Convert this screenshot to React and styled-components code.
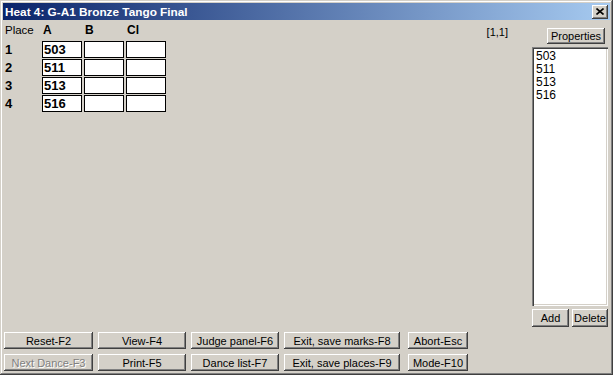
import React from 'react';
import styled, { createGlobalStyle } from 'styled-components';

const GlobalStyle = createGlobalStyle`
  html, body {
    margin: 0;
    padding: 0;
    background: #ffffff;
    width: 615px;
    height: 375px;
    overflow: hidden;
  }
  #root {
    width: 615px;
    height: 375px;
  }
`;

const places = [
  { place: 1, a: '503' },
  { place: 2, a: '511' },
  { place: 3, a: '513' },
  { place: 4, a: '516' },
];

const entries = ['503', '511', '513', '516'];

const footerButtons = [
  ['Reset-F2', 'View-F4', 'Judge panel-F6', 'Exit, save marks-F8', 'Abort-Esc'],
  ['Next Dance-F3', 'Print-F5', 'Dance list-F7', 'Exit, save places-F9', 'Mode-F10'],
];

const App = () => {
  return (
    <>
      <GlobalStyle />
      <Window>
        <TitleBar>
          <TitleText>Heat 4: G-A1 Bronze Tango Final</TitleText>
          <CloseButton>
            <svg width="8" height="7" viewBox="0 0 8 7">
              <path d="M0.5 0.5 L7.5 6.5 M7.5 0.5 L0.5 6.5" stroke="#000" strokeWidth="1.6" fill="none" />
            </svg>
          </CloseButton>
        </TitleBar>
        <Body>
          <Main>
            <MarksArea>
              <MarksGrid>
                <HeadLabel>Place</HeadLabel>
                <HeadLabel bold>A</HeadLabel>
                <HeadLabel bold>B</HeadLabel>
                <HeadLabel bold>Cl</HeadLabel>
                {places.map((row) => (
                  <React.Fragment key={row.place}>
                    <PlaceNo>{row.place}</PlaceNo>
                    <MarkCell>{row.a}</MarkCell>
                    <MarkCell />
                    <MarkCell />
                  </React.Fragment>
                ))}
              </MarksGrid>
              <Cursor>[1,1]</Cursor>
            </MarksArea>
            <SideColumn>
              <Button w={58} self="flex-end">Properties</Button>
              <ListBox>
                {entries.map((e) => (
                  <ListItem key={e}>{e}</ListItem>
                ))}
              </ListBox>
              <SideButtons>
                <Button w={37} h={18}>Add</Button>
                <Button w={36} h={18}>Delete</Button>
              </SideButtons>
            </SideColumn>
          </Main>
          <Footer>
            {footerButtons.map((row, r) =>
              row.map((label, c) => (
                <Button key={label} h={17} disabled={r === 1 && c === 0}>
                  {label}
                </Button>
              ))
            )}
          </Footer>
        </Body>
      </Window>
    </>
  );
};

const Window = styled.div`
  box-sizing: border-box;
  width: 613px;
  height: 375px;
  padding: 3px;
  background: #d4d0c8;
  display: flex;
  flex-direction: column;
  box-shadow: inset -1px -1px #404040, inset 1px 1px #d4d0c8,
    inset -2px -2px #808080, inset 2px 2px #ffffff;
  font-family: "Liberation Sans", Arial, sans-serif;
  color: #000;
`;

const TitleBar = styled.div`
  height: 17px;
  display: flex;
  align-items: center;
  justify-content: space-between;
  padding: 0 2px 0 2px;
  background: linear-gradient(to right, #0a246a, #a6caf0);
`;

const TitleText = styled.span`
  color: #ffffff;
  font-weight: bold;
  font-size: 11.8px;
  white-space: nowrap;
`;

const CloseButton = styled.div`
  box-sizing: border-box;
  width: 16px;
  height: 14px;
  display: flex;
  align-items: center;
  justify-content: center;
  background: #d4d0c8;
  box-shadow: inset -1px -1px #404040, inset 1px 1px #ffffff,
    inset -2px -2px #808080;
`;

const Body = styled.div`
  flex: 1;
  display: flex;
  flex-direction: column;
  padding: 0 2px 1px 0;
  min-height: 0;
`;

const Main = styled.div`
  flex: 1;
  display: flex;
  min-height: 0;
`;

const MarksArea = styled.div`
  flex: 1;
  display: flex;
  align-items: flex-start;
  padding: 3px 0 0 2px;
`;

const MarksGrid = styled.div`
  display: grid;
  grid-template-columns: 35px 40px 40px 40px;
  grid-template-rows: 17px repeat(4, 17px);
  column-gap: 2px;
  row-gap: 1px;
`;

const HeadLabel = styled.div`
  font-size: ${(p) => (p.bold ? '12px' : '11.5px')};
  font-weight: ${(p) => (p.bold ? 'bold' : 'normal')};
  line-height: 14px;
  padding-left: ${(p) => (p.bold ? '1px' : '0')};
`;

const PlaceNo = styled.div`
  font-size: 13px;
  font-weight: bold;
  line-height: 17px;
`;

const MarkCell = styled.div`
  box-sizing: border-box;
  border: 1px solid #000;
  background: #ffffff;
  font-size: 13px;
  font-weight: bold;
  line-height: 15px;
  padding-left: 1px;
`;

const Cursor = styled.div`
  margin-left: auto;
  margin-right: 24px;
  margin-top: 3px;
  font-size: 11px;
`;

const SideColumn = styled.div`
  width: 76px;
  display: flex;
  flex-direction: column;
  padding-top: 8px;
`;

const Button = styled.div`
  box-sizing: border-box;
  width: ${(p) => (p.w ? `${p.w}px` : 'auto')};
  height: ${(p) => (p.h ? p.h : 16)}px;
  align-self: ${(p) => p.self || 'auto'};
  margin-right: ${(p) => (p.self ? '3px' : '0')};
  display: flex;
  align-items: center;
  justify-content: center;
  background: #d4d0c8;
  font-size: 11px;
  white-space: nowrap;
  color: ${(p) => (p.disabled ? '#808080' : '#000')};
  text-shadow: ${(p) => (p.disabled ? '1px 1px #ffffff' : 'none')};
  box-shadow: inset -1px -1px #404040, inset 1px 1px #ffffff,
    inset -2px -2px #808080;
`;

const ListBox = styled.div`
  flex: 1;
  margin-top: 3px;
  background: #ffffff;
  padding: 3px 4px;
  box-shadow: inset 1px 1px #808080, inset 2px 2px #404040,
    inset -1px -1px #ffffff, inset -2px -2px #d4d0c8;
`;

const ListItem = styled.div`
  font-size: 12px;
  line-height: 13px;
`;

const SideButtons = styled.div`
  display: flex;
  gap: 3px;
  margin-top: 3px;
`;

const Footer = styled.div`
  display: grid;
  grid-template-columns: 89px 88px 88px 116px 63px;
  grid-template-rows: 17px 17px;
  column-gap: 5px;
  row-gap: 5px;
  margin-top: 5px;
  padding-left: 1px;
  & > :nth-child(5n) {
    margin-left: 3px;
  }
`;

export default App;
